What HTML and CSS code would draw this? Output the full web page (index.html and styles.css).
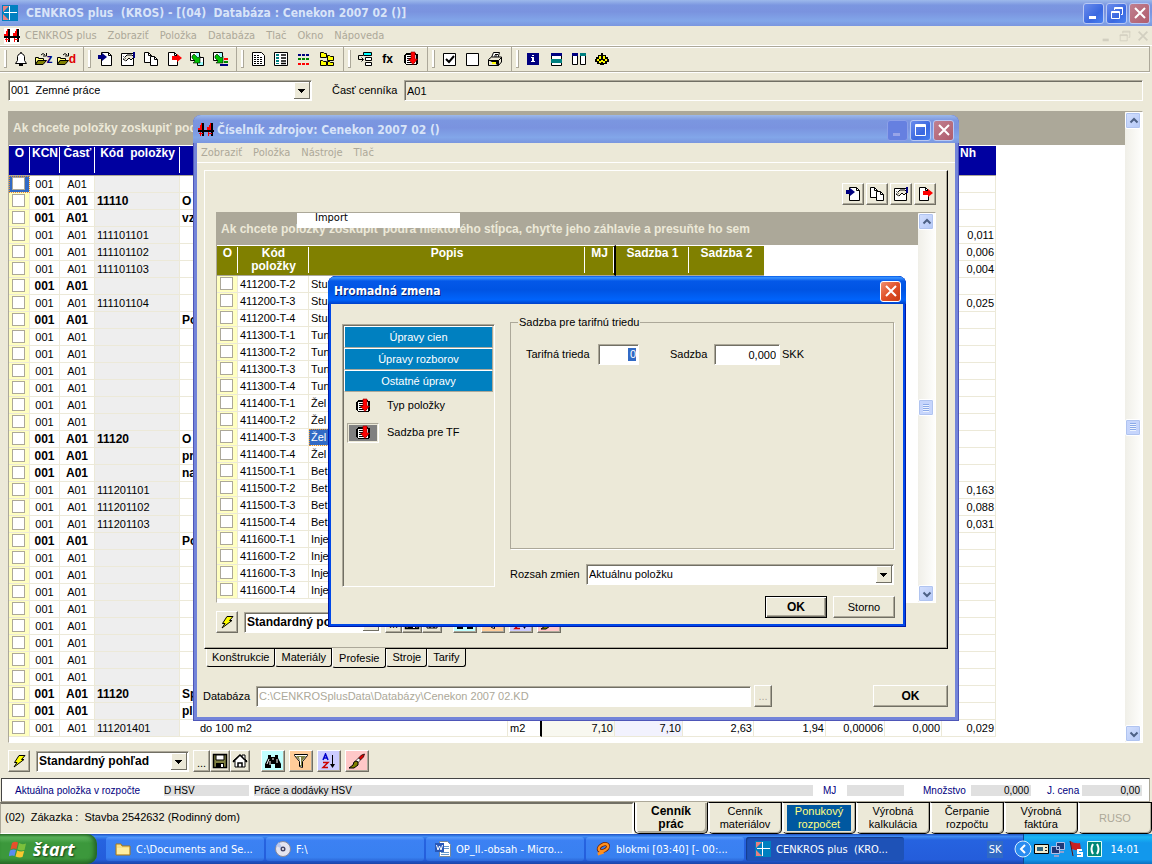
FILE: index.html
```html
<!DOCTYPE html>
<html lang="sk">
<head>
<meta charset="utf-8">
<title>CENKROS plus</title>
<link rel="stylesheet" href="styles.css">
</head>
<body>
<svg class="sprite" aria-hidden="true">
  <symbol id="app" viewBox="0 0 16 16"><path fill="#0080c0" d="M0 0h16v16H0z"/><path fill="#e88080" d="M1 1h6L1 7zM1 9l6 6H1z"/><path fill="#fff" d="M7 1h1v14H7zM2 7h13v1H2z"/></symbol>
  <symbol id="bridge" viewBox="0 0 16 16"><path fill="#000" d="M4 1h2v13H4zM13 1h2v13h-2zM0 8h16v2H0z"/><path fill="#f00" d="M2 3h2v5H2zM0 6h2v2H0zM3 1h1v2H3zM11 3h2v5h-2zM9 5h2v3H9zM12 1h1v2h-1zM1 11h4v1H1zM2 10h1v4H2zM10 11h4v1h-4zM10 10h1v4h-1z"/></symbol>
  <symbol id="bell" viewBox="0 0 16 16"><path fill="#fff" stroke="#000" d="M7.500 1.500h1v1l2 1 1 2v4l2 3h-11l2-3v-4l1-2 2-1z"/><path fill="#000" d="M6 13h4v2H6z"/></symbol>
  <symbol id="folder" viewBox="0 0 12 16"><path d="M.5 6.500h3v1h5v2H3l-2.500 4z" fill="#ffff80" stroke="#000"/><path d="M3 9.500h8.500l-3.500 4H.5z" fill="#808000" stroke="#000"/><path d="M6 4q2-3 4 0m1.500-2v3H8" fill="none" stroke="#000"/></symbol>
  <symbol id="pagein" viewBox="0 0 16 16"><path fill="#fff" stroke="#000" d="M4.500 1.500h7l3 3v10h-10z"/><path fill="none" stroke="#000" d="M11.500 1.500v3h3"/><path fill="#000080" d="M1 4h4V2l5 4-5 4V8H1z"/></symbol>
  <symbol id="hand" viewBox="0 0 16 16"><path fill="#fff" stroke="#000" d="M1.500 2.500h12v12h-12z"/><path fill="#ece9d8" stroke="#000" d="M3 8l4-4 5 0 2 2-3 3-2-2-2 2-1 1z"/><path fill="#000080" d="M13 1h2v6h-2z"/><path stroke="#777" d="M3 5l3 3M3 7l3 3"/></symbol>
  <symbol id="copy" viewBox="0 0 16 16"><path fill="#fff" stroke="#000" d="M1.500 1.500h4l3 3v7h-7z"/><path fill="#fff" stroke="#000" d="M7.500 5.500h4l3 3v6h-7z"/><path fill="none" stroke="#000" d="M5.500 1.500v3h3M11.500 5.500v3h3"/></symbol>
  <symbol id="pageout" viewBox="0 0 16 16"><path fill="#fff" stroke="#000" d="M2.500 1.500h6l3 3v10h-9z"/><path fill="none" stroke="#000" d="M8.500 1.500v3h3"/><path fill="#f00" d="M6 5h5V3l5 4-5 4V9H6z"/></symbol>
  <symbol id="green" viewBox="0 0 16 16"><path fill="#fff" stroke="#000" d="M1.500 1.500h9v8h-9zM8.500 6.500h6v8h-6z"/><path fill="#a0ffff" d="M7 2h3v5H7zM9 11h5v3H9z"/><path fill="#00c000" stroke="#000" stroke-width=".6" d="M3 5l2-2 4 4 2-2v7H4l2-2-3-3z"/></symbol>
  <symbol id="green2" viewBox="0 0 16 16"><path fill="#fff" stroke="#000" d="M1.500 1.500h9v8h-9z"/><path fill="#a0ffff" d="M7 2h3v5H7z"/><path fill="#f00" d="M12 7h4v2h-4z"/><path fill="#080" d="M12 10h4v2h-4z"/><path fill="#000080" d="M8 13h8v2H8z"/><path fill="#00c000" stroke="#000" stroke-width=".6" d="M3 5l2-2 4 4 2-2v7H4l2-2-3-3z"/></symbol>
  <symbol id="doc" viewBox="0 0 16 16"><path fill="#fff" stroke="#000" d="M2.500 1.500h9l3 3v10h-12z"/><path stroke="#000" stroke-dasharray="2 1" d="M4 4.500h6M4 6.500h8M4 8.500h8M4 10.500h8M4 12.500h8"/></symbol>
  <symbol id="sheet" viewBox="0 0 16 16"><path fill="#fff" stroke="#000" d="M1.500 1.500h13v13h-13z"/><path fill="#008080" d="M3 3h3v2H3zM3 6h3v2H3zM3 9h3v2H3zM3 12h3v1H3z"/><path stroke="#000" stroke-width="1.500" d="M8 4h5M8 7h5M8 10h5M8 12.500h5"/></symbol>
  <symbol id="lines" viewBox="0 0 16 16"><path stroke="#000080" stroke-width="2" stroke-dasharray="3 1" d="M2 4h12"/><path stroke="#008000" stroke-width="2" stroke-dasharray="3 1" d="M2 8h12"/><path stroke="#f00" stroke-width="2" stroke-dasharray="3 1" d="M2 13h12"/></symbol>
  <symbol id="tree" viewBox="0 0 16 16"><path fill="#ff0" stroke="#000" d="M1.500 1.500h3l1 1h2v4h-6zM8.500 4.500h2l1 1h3v4h-6zM1.500 9.500h2l1 1h3v4h-6zM8.500 10.500h2l1 1h3v3h-6z"/></symbol>
  <symbol id="insert" viewBox="0 0 16 16"><path fill="#0ff" stroke="#000" d="M6.500 1.500h8v3h-8z"/><path fill="#fff" stroke="#000" d="M8.500 6.500h6v3h-6zM8.500 11.500h6v3h-6z"/><path fill="none" stroke="#000" d="M6 4.500H1.500v4H6M4.500 6.500l2 2-2 2"/></symbol>
  <symbol id="book" viewBox="0 0 16 16"><path fill="#000" d="M3 2h10v1h2v10h-1v1H3v-1H2v-1H1V4h1V3h1z"/><path fill="#fff" d="M3 4h10v9H3z"/><path fill="#000" d="M4 5h8v1H4zM4 7h8v1H4zM4 9h8v1H4zM4 11h8v1H4z"/><path fill="#f00" stroke="#900000" stroke-width=".6" d="M8 1h4v7h2.500L10 13.500 5.500 8H8z"/></symbol>
  <symbol id="check" viewBox="0 0 16 16"><path fill="#fff" stroke="#000" d="M2.500 2.500h12v12h-12z"/><path fill="none" stroke="#000" stroke-width="2" d="M5 8l3 3 5-6"/></symbol>
  <symbol id="box" viewBox="0 0 16 16"><path fill="#fff" stroke="#000" d="M2.500 2.500h12v12h-12z"/></symbol>
  <symbol id="printer" viewBox="0 0 16 16"><path fill="#fff" stroke="#000" d="M4.500 6.500l2-5h6l-1.500 5"/><path fill="#ece9d8" stroke="#000" d="M1.500 8.500l3-2.500h10v5l-3 3.500h-10z"/><path stroke="#000" d="M2 9.500h9.500v5M11.500 9.500l3-3M8 3.500h3M7 5h3"/><path fill="#ff0" d="M5 11h4v2H5z"/></symbol>
  <symbol id="info" viewBox="0 0 16 16"><path fill="#000080" d="M2 2h12v12H2z"/><path fill="#fff" d="M7 4h2v1H7zM6 6h3v4h1v1H6v-1h1V7H6z"/></symbol>
  <symbol id="rows" viewBox="0 0 16 16"><path fill="#fff" stroke="#000" d="M3.500 2.500h10v12h-10z"/><path fill="#000080" d="M3 2h11v3H3z"/><path fill="#008080" d="M3 8h11v4H3z"/></symbol>
  <symbol id="cols" viewBox="0 0 16 16"><path fill="#fff" stroke="#000" d="M1.500 2.500h5v11h-5zM9.500 2.500h5v11h-5z"/><path fill="#000080" d="M1 2h6v3H1z"/><path fill="#008080" d="M9 2h6v3H9z"/></symbol>
  <symbol id="gear" viewBox="0 0 16 16"><path fill="#000" d="M7 2h2v2h3v2h2v2h1v3h-2v2h-3v1H6v-1H3v-2H1V8h1V6h2V4h3z"/><path fill="#ff0" d="M5 5h2v3H5zM9 5h2v3H9zM3 8h2v2H3zM11 8h2v2h-2zM5 10h2v2H5zM9 10h2v2H9zM7 9h2v2H7z"/></symbol>
  <symbol id="bolt" viewBox="0 0 16 16"><path fill="#ff0" stroke="#000" d="M8 2.500h6l-3.500 4H13L3 14l3-4.500H3.500z"/></symbol>
  <symbol id="floppy" viewBox="0 0 16 16"><path fill="#808040" stroke="#000" stroke-width="1.500" d="M1.500 1.500h13v13h-13z"/><path fill="#fff" stroke="#000" d="M4 2h8v5H4z"/><path fill="#000" d="M4 10h8v5H4z"/><path fill="#fff" d="M9 11h2v3H9z"/></symbol>
  <symbol id="house" viewBox="0 0 16 16"><path fill="#fff" stroke="#000" d="M1 8l7-6 2 2V2h3v4l2 2h-2v6H3V8z"/><path fill="none" stroke="#000" stroke-width="1.500" d="M1 9l7-7 7 7M6 14v-4h4v4"/></symbol>
  <symbol id="binoc" viewBox="0 0 16 16"><path fill="#000" d="M3 2h3v2h4V2h3v3l3 6v4h-6v-4H6v4H0v-4l3-6z"/><path stroke="#fff" d="M2 11l2-5M5 8v4M12 6v4M8 5v2"/></symbol>
  <symbol id="funnel" viewBox="0 0 16 16"><path fill="#fff" stroke="#000" d="M1.500 1.500h13v1l-5 6v6l-3-1v-5l-5-6z"/><path fill="#808040" d="M3 3h10l-4 5v5H7V8z"/><path fill="#fff" d="M6 4h2v8H7V8z"/></symbol>
  <symbol id="sort" viewBox="0 0 16 16"><path fill="none" stroke="#00c" stroke-width="1.500" d="M2 7l2.500-6L7 7M3 5h3"/><path fill="none" stroke="#c00" stroke-width="1.500" d="M2 9.500h5l-5 5h5"/><path fill="#000" d="M11 2h1v9h2l-2.500 4L9 11h2z"/></symbol>
  <symbol id="brush" viewBox="0 0 16 16"><path fill="#d00" stroke="#000" stroke-width=".7" d="M15.500 1l-3 1-3 3 2 2 3-3z"/><path fill="#fff" stroke="#000" stroke-width=".7" d="M9.500 5L7 7.500l2 2L11.500 7z"/><path fill="#808000" stroke="#000" d="M7 8L5 9l-1 3-4 3h5l4-3V9z"/></symbol>
  <symbol id="flag" viewBox="0 0 20 20"><path fill="#e8502c" d="M3 4q3-2 6-.5L7.500 10q-3-1-6 .5z"/><path fill="#7cc03c" d="M10 4q3 2 7 .5L15.500 11q-3 1-7 -.5z"/><path fill="#5a8cf0" d="M1 11.500q3-1.500 6-.5L5.500 17Q3 16-.5 17.500z"/><path fill="#f8c830" d="M8.200 11.500q3 1.500 7 .5L13.500 18q-3 1-7-.5z"/></symbol>
  <symbol id="fold" viewBox="0 0 16 16"><path fill="#f8e088" stroke="#a87818" d="M1 3h5l1 2h8v9H1z"/><path fill="#ffeda0" d="M2 7h12v6H2z"/></symbol>
  <symbol id="cd" viewBox="0 0 16 16"><circle cx="8" cy="8" r="7.500" fill="#e4e4f0" stroke="#889"/><path fill="#b8c8f0" d="M8 8L1 5l3-4z"/><circle cx="8" cy="8" r="2.500" fill="#446"/><circle cx="8" cy="8" r="1" fill="#fff"/></symbol>
  <symbol id="word" viewBox="0 0 16 16"><path fill="#fff" stroke="#789" d="M4.500.5h8l3 3v12h-11z"/><path stroke="#69c" d="M9 5.500h5M9 7.500h5M6 11.500h8M6 13.500h8"/><path fill="#2858b8" d="M0 2h9v9H0z"/><path fill="none" stroke="#fff" d="M1.500 4l1.500 5 1.500-4L6 9l1.500-5"/></symbol>
  <symbol id="player" viewBox="0 0 16 16"><g transform="rotate(-28 8 8)"><ellipse cx="9" cy="7" rx="5" ry="3" fill="none" stroke="#702000" stroke-width="4"/><ellipse cx="9" cy="7" rx="5" ry="3" fill="none" stroke="#ff9020" stroke-width="2.500"/><path stroke="#ff9020" stroke-width="3" d="M1 10l6 1"/></g></symbol>
  <symbol id="min" viewBox="0 0 16 16"><path fill="currentColor" d="M3 11h7v3H3z"/></symbol>
  <symbol id="rest" viewBox="0 0 16 16"><path fill="none" stroke="currentColor" d="M2.500 6.500h8v7h-8zM2 7.500h9M5.500 5V2.500h8v7H12M5 3.500h9"/></symbol>
  <symbol id="max" viewBox="0 0 16 16"><path fill="none" stroke="currentColor" d="M2.500 2.500h10v11h-10zM2 3.500h11M2 4.500h11"/></symbol>
  <symbol id="x" viewBox="0 0 16 16"><path fill="none" stroke="currentColor" stroke-width="2" d="M3 3l10 10M13 3L3 13"/></symbol>
  <symbol id="up" viewBox="0 0 16 16"><path fill="none" stroke="#4d6185" stroke-width="2" d="M4.500 9.500L8 6l3.500 3.500"/></symbol>
  <symbol id="down" viewBox="0 0 16 16"><path fill="none" stroke="#4d6185" stroke-width="2" d="M4.500 6.500L8 10l3.500-3.500"/></symbol>
</svg>

<main class="desktop">
  <header class="titlebar">
    <svg class="ico"><use href="#app"/></svg>
    <h1 class="title">CENKROS plus&nbsp; (KROS) - [(04)&nbsp; Databáza : Cenekon 2007 02 ()]</h1>
    <button class="capbtn" aria-label="Minimalizovať"><svg class="ico"><use href="#min"/></svg></button>
    <button class="capbtn" aria-label="Obnoviť"><svg class="ico"><use href="#rest"/></svg></button>
    <button class="capbtn capbtn-close" aria-label="Zavrieť"><svg class="ico"><use href="#x"/></svg></button>
  </header>
  <nav class="menubar menubar-main">
    <svg class="ico bridge"><use href="#bridge"/></svg>
    <span>CENKROS plus</span><span>Zobraziť</span><span>Položka</span><span>Databáza</span><span>Tlač</span><span>Okno</span><span>Nápoveda</span>
    <div class="mdi"><svg><use href="#min"/></svg><svg><use href="#rest"/></svg><svg><use href="#x"/></svg></div>
  </nav>
  <div class="toolbar">
    <div class="group"><i class="grip"></i>
      <button aria-label="Zvonček"><svg class="ico"><use href="#bell"/></svg></button>
      <button><svg class="fold"><use href="#folder"/></svg><b class="navy">z</b></button>
      <button><svg class="fold"><use href="#folder"/></svg><b class="red">d</b></button></div>
    <div class="group"><i class="grip"></i>
      <button aria-label="Vložiť"><svg class="ico"><use href="#pagein"/></svg></button>
      <button aria-label="Vlastnosti"><svg class="ico"><use href="#hand"/></svg></button>
      <button aria-label="Kopírovať"><svg class="ico"><use href="#copy"/></svg></button>
      <button aria-label="Vyňať"><svg class="ico"><use href="#pageout"/></svg></button>
      <button aria-label="Presun"><svg class="ico"><use href="#green"/></svg></button>
      <button aria-label="Presun viac"><svg class="ico"><use href="#green2"/></svg></button></div>
    <div class="group"><i class="grip"></i>
      <button aria-label="Text"><svg class="ico"><use href="#doc"/></svg></button>
      <button aria-label="Rozbor"><svg class="ico"><use href="#sheet"/></svg></button>
      <button aria-label="Riadky"><svg class="ico"><use href="#lines"/></svg></button>
      <button aria-label="Strom"><svg class="ico"><use href="#tree"/></svg></button></div>
    <div class="group"><i class="grip"></i>
      <button aria-label="Zaradiť"><svg class="ico"><use href="#insert"/></svg></button>
      <button><b>fx</b></button>
      <button aria-label="Hromadná zmena"><svg class="ico"><use href="#book"/></svg></button></div>
    <div class="group"><i class="grip"></i>
      <button aria-label="Označiť"><svg class="ico"><use href="#check"/></svg></button>
      <button aria-label="Odznačiť"><svg class="ico"><use href="#box"/></svg></button>
      <button aria-label="Tlač"><svg class="ico"><use href="#printer"/></svg></button></div>
    <div class="group group-last"><i class="grip"></i>
      <button aria-label="Info"><svg class="ico"><use href="#info"/></svg></button>
      <button aria-label="Vodorovne"><svg class="ico"><use href="#rows"/></svg></button>
      <button aria-label="Zvislo"><svg class="ico"><use href="#cols"/></svg></button>
      <button aria-label="Nastavenia"><svg class="ico"><use href="#gear"/></svg></button></div>
  </div>

  <div class="filter">
    <select class="combo combo-part" aria-label="Cenník"><option>001&nbsp; Zemné práce</option></select>
    <label for="part">Časť cenníka</label>
    <input id="part" class="field field-flat" value="A01" readonly>
  </div>

  <section class="grid grid-main">
    <div class="sheet">
      <p class="hint">Ak chcete položky zoskupiť podľa</p>
      <table class="tbl">
        <colgroup><col style="width:21px"><col style="width:30px"><col style="width:35px"><col style="width:85px"><col style="width:328px"><col style="width:34px"><col style="width:73px"><col style="width:68px"><col style="width:71px"><col style="width:72px"><col style="width:59px"><col style="width:57px"><col style="width:54px"></colgroup>
        <thead class="navyhead"><tr><th>O</th><th>KCN</th><th>Časť</th><th>Kód&nbsp; položky</th><th></th><th></th><th></th><th></th><th></th><th></th><th></th><th></th><th class="left">Nh</th></tr></thead>
        <tbody id="items"></tbody>
      </table>
    </div>
    <div class="scroll"><button class="sbtn" aria-label="Hore"><svg class="ico"><use href="#up"/></svg></button><i class="sbtn thumb"></i><button class="sbtn" aria-label="Dole"><svg class="ico"><use href="#down"/></svg></button></div>
  </section>

  <div class="viewbar viewbar-main">
    <button class="tb" aria-label="Obnoviť"><svg class="ico"><use href="#bolt"/></svg></button>
    <select class="combo combo-view" aria-label="Pohľad"><option>Štandardný pohľad</option></select>
    <span class="trio"><button class="tb tb-dots">...</button><button class="tb tb-narrow" aria-label="Uložiť"><svg class="ico"><use href="#floppy"/></svg></button><button class="tb tb-narrow" aria-label="Domov"><svg class="ico"><use href="#house"/></svg></button></span>
    <span class="quad"><button class="tb cyan" aria-label="Hľadať"><svg class="ico"><use href="#binoc"/></svg></button><button class="tb orange" aria-label="Filter"><svg class="ico"><use href="#funnel"/></svg></button><button class="tb violet" aria-label="Triediť"><svg class="ico"><use href="#sort"/></svg></button><button class="tb pink" aria-label="Formát"><svg class="ico"><use href="#brush"/></svg></button></span>
  </div>

  <div class="strip">
    <span class="lbl lbl-first">Aktuálna položka v rozpočte</span><output class="val v1">D HSV</output><output class="val v2">Práce a dodávky HSV</output>
    <span class="lbl lbl-mj">MJ</span><output class="val v3"></output><span class="lbl lbl-mn">Množstvo</span><output class="val v4">0,000</output><span class="lbl lbl-jc">J. cena</span><output class="val v4">0,00</output>
  </div>
  <div class="status">
    <p class="order">(02)&nbsp; Zákazka :&nbsp; Stavba 2542632 (Rodinný dom)</p>
    <nav class="views">
      <button class="vt vt-on">Cenník<br>prác</button><button class="vt">Cenník<br>materiálov</button><button class="vt"><span class="hot">Ponukový<br>rozpočet</span></button><button class="vt">Výrobná<br>kalkulácia</button><button class="vt">Čerpanie<br>rozpočtu</button><button class="vt">Výrobná<br>faktúra</button><button class="vt vt-off" disabled>RUSO</button>
    </nav>
  </div>
  <footer class="taskbar">
    <button class="start"><svg class="winlogo"><use href="#flag"/></svg>štart</button>
    <div class="tasks">
      <button class="task"><svg class="ico"><use href="#fold"/></svg>C:\Documents and Se...</button>
      <button class="task"><svg class="ico"><use href="#cd"/></svg>F:\</button>
      <button class="task"><svg class="ico"><use href="#word"/></svg>OP_II.-obsah - Micro...</button>
      <button class="task"><svg class="ico"><use href="#player"/></svg>blokmi [03:40] [- 00:...</button>
      <button class="task task-on"><svg class="ico"><use href="#app"/></svg>CENKROS plus&nbsp; (KRO...</button>
    </div>
    <span class="lang">SK</span>
    <div class="tray">
      <svg class="traypic" viewBox="0 0 92 20">
        <circle cx="9" cy="10" r="8" fill="#2a8cf0" stroke="#d8ecff"/><path d="M11 6l-4 4 4 4" fill="none" stroke="#fff" stroke-width="2"/>
        <path fill="#f0ecd0" stroke="#000" d="M20.500 5.500h14v9h-14z"/><path fill="#306880" d="M23 8h6v4h-6z"/><path fill="#222" d="M31 8h2v1h-2zM31 11h2v1h-2z"/>
        <path fill="#203878" stroke="#b0c0e8" d="M42.500 3.500h8v7h-8zM37.500 7.500h8v7h-8z"/><path fill="#90a0d0" d="M40 16h5v2h-5zM46 12h4v2h-4z"/>
        <path fill="#c82020" d="M56 2q5 3 10 2l1 7q-5 1-9-1z"/><path stroke="#601010" d="M56 2l3 15"/><path fill="none" stroke="#fff" stroke-width="2" d="M68 11h-4v3h4v3h-5"/>
        <path fill="#008878" stroke="#e0fff8" d="M73.500 2.500h14v15h-14z"/><path fill="none" stroke="#fff" stroke-width="2" d="M79 5q-3 5 0 10M83 5q3 5 0 10"/>
      </svg>
      <time>14:01</time>
    </div>
  </footer>

  <section class="win" aria-label="Číselník zdrojov">
    <header class="titlebar titlebar-win">
      <svg class="ico"><use href="#bridge"/></svg>
      <h2 class="title">Číselník zdrojov: Cenekon 2007 02 ()</h2>
      <button class="capbtn capbtn-off" aria-label="Minimalizovať"><svg class="ico"><use href="#min"/></svg></button>
      <button class="capbtn" aria-label="Maximalizovať"><svg class="ico"><use href="#max"/></svg></button>
      <button class="capbtn capbtn-close" aria-label="Zavrieť"><svg class="ico"><use href="#x"/></svg></button>
    </header>
    <nav class="menubar menubar-win"><span>Zobraziť</span><span>Položka</span><span>Nástroje</span><span>Tlač</span></nav>
    <div class="page">
      <div class="pagetools">
        <button class="tb" aria-label="Vložiť"><svg class="ico"><use href="#pagein"/></svg></button><button class="tb" aria-label="Kopírovať"><svg class="ico"><use href="#copy"/></svg></button><button class="tb" aria-label="Vlastnosti"><svg class="ico"><use href="#hand"/></svg></button><button class="tb" aria-label="Vyňať"><svg class="ico"><use href="#pageout"/></svg></button>
      </div>
      <div class="grid grid-win">
        <div class="sheet">
          <p class="hint">Ak chcete položky zoskupiť podľa niektorého stĺpca, chyťte jeho záhlavie a presuňte ho sem</p>
          <div class="popup">Import</div>
          <table class="tbl">
            <colgroup><col style="width:21px"><col style="width:71px"><col style="width:276px"><col style="width:31px"><col style="width:73px"><col style="width:75px"></colgroup>
            <thead class="olivehead"><tr><th>O</th><th>Kód<br>položky</th><th>Popis</th><th class="thick">MJ</th><th>Sadzba 1</th><th>Sadzba 2</th></tr></thead>
            <tbody id="jobs"></tbody>
          </table>
        </div>
        <div class="scroll"><button class="sbtn" aria-label="Hore"><svg class="ico"><use href="#up"/></svg></button><i class="sbtn thumb"></i><button class="sbtn" aria-label="Dole"><svg class="ico"><use href="#down"/></svg></button></div>
      </div>
      <div class="viewbar viewbar-win">
        <button class="tb" aria-label="Obnoviť"><svg class="ico"><use href="#bolt"/></svg></button>
        <select class="combo combo-view" aria-label="Pohľad"><option>Štandardný pohľad</option></select>
        <span class="trio"><button class="tb tb-dots">...</button><button class="tb tb-narrow" aria-label="Uložiť"><svg class="ico"><use href="#floppy"/></svg></button><button class="tb tb-narrow" aria-label="Domov"><svg class="ico"><use href="#house"/></svg></button></span>
        <span class="quad"><button class="tb cyan" aria-label="Hľadať"><svg class="ico"><use href="#binoc"/></svg></button><button class="tb orange" aria-label="Filter"><svg class="ico"><use href="#funnel"/></svg></button><button class="tb violet" aria-label="Triediť"><svg class="ico"><use href="#sort"/></svg></button><button class="tb pink" aria-label="Formát"><svg class="ico"><use href="#brush"/></svg></button></span>
      </div>
    </div>
    <nav class="tabs"><button class="tab">Konštrukcie</button><button class="tab">Materiály</button><button class="tab tab-on">Profesie</button><button class="tab">Stroje</button><button class="tab">Tarify</button></nav>
    <div class="dbrow">
      <label for="db">Databáza</label>
      <input id="db" class="field" value="C:\CENKROSplusData\Databázy\Cenekon 2007 02.KD" disabled>
      <button class="push push-dots" disabled>...</button>
      <button class="push push-ok">OK</button>
    </div>
  </section>

  <section class="dlg" role="dialog" aria-label="Hromadná zmena">
    <header class="titlebar titlebar-dlg">
      <h2 class="title">Hromadná zmena</h2>
      <button class="capbtn capbtn-red" aria-label="Zavrieť"><svg class="ico"><use href="#x"/></svg></button>
    </header>
    <div class="dlgbody">
      <div class="outlook">
        <button class="bar">Úpravy cien</button><button class="bar">Úpravy rozborov</button><button class="bar">Ostatné úpravy</button>
        <button class="entry"><span class="pic"><svg class="ico"><use href="#book"/></svg></span>Typ položky</button>
        <button class="entry"><span class="pic pic-on"><svg class="ico"><use href="#book"/></svg></span>Sadzba pre TF</button>
      </div>
      <div class="side">
        <fieldset class="box">
          <legend>Sadzba pre tarifnú triedu</legend>
          <label for="tt">Tarifná trieda</label><span class="field num"><input id="tt" class="sel" value="0"></span>
          <label for="rate" class="ratelbl">Sadzba</label><input id="rate" class="field rate" value="0,000"><span class="unit">SKK</span>
        </fieldset>
        <div class="scope"><label for="scope">Rozsah zmien</label><select id="scope" class="combo"><option>Aktuálnu položku</option></select></div>
      </div>
    </div>
    <div class="actions"><button class="push push-default">OK</button><button class="push">Storno</button></div>
  </section>
</main>
<script src="tables.js"></script>
</body>
</html>
```
FILE: tables.js
```js
// Item rows: [bold, code, description, Nh]
var plain = [0, "", "", ""];
var items = [
  plain, [1, "11110", "O", ""], [1, "", "vz", ""],
  [0, "111101101", "", "0,011"], [0, "111101102", "", "0,006"], [0, "111101103", "", "0,004"],
  [1, "", "", ""], [0, "111101104", "", "0,025"], [1, "", "Po", ""],
  plain, plain, plain, plain, plain, plain,
  [1, "11120", "O", ""], [1, "", "pr", ""], [1, "", "na", ""],
  [0, "111201101", "", "0,163"], [0, "111201102", "", "0,088"], [0, "111201103", "", "0,031"],
  [1, "", "Po", ""],
  plain, plain, plain, plain, plain, plain, plain, plain,
  [1, "11120", "Sp", ""], [1, "", "pl", ""],
  [0, "111201401", "do 100 m2", "0,029"]
];
var tick = '<input type="checkbox" class="tick" aria-label="Označiť">';
document.getElementById("items").innerHTML = items.map(function (r, i) {
  var last = i === items.length - 1;
  var nums = last ? ["m2", "7,10", "7,10", "2,63", "1,94", "0,00006", "0,000"] : ["", "", "", "", "", "", ""];
  return '<tr class="' + (r[0] ? "strong" : "") + '"><td class="o' + (i ? "" : " cur") + '">' + tick +
    '</td><td class="mid">001</td><td class="mid">A01</td><td class="code">' + r[1] +
    '</td><td class="' + (last ? "indent" : "") + '">' + r[2] + '</td><td class="thick">' + nums[0] +
    '</td><td class="num cream">' + nums[1] + '</td><td class="num lilac">' + nums[2] + "</td>" +
    nums.slice(3).concat(r[3]).map(function (n) { return '<td class="num">' + n + "</td>"; }).join("") + "</tr>";
}).join("");

// Job groups: [group, class numbers, description]
var groups = [
  ["411200", [2, 3, 4], "Stu"], ["411300", [1, 2, 3, 4], "Tun"], ["411400", [1, 2, 3, 4], "Žel"],
  ["411500", [1, 2, 3, 4], "Bet"], ["411600", [1, 2, 3, 4], "Inje"]
];
document.getElementById("jobs").innerHTML = groups.map(function (g) {
  return g[1].map(function (n) {
    var code = g[0] + "-T-" + n;
    return '<tr><td class="o">' + tick + "</td><td>" + code + '</td><td class="' +
      (code === "411400-T-3" ? "cur" : "") + '">' + g[2] + '</td><td class="thick"></td><td></td><td></td></tr>';
  }).join("");
}).join("");
```
FILE: styles.css
```css
* { box-sizing: border-box; }
body { margin: 0; background: #ece9d8; color: #000; font: 11px/13px "Liberation Sans", Arial, sans-serif; }
p, h1, h2 { margin: 0; font: inherit; }
button, input, select { font: inherit; color: inherit; margin: 0; padding: 0; border: 0; background: none; border-radius: 0; }
svg { display: block; flex: none; }
.sprite { position: absolute; width: 0; height: 0; }
.ico { width: 16px; height: 16px; }
.desktop { position: relative; min-height: 100vh; display: flex; flex-direction: column; overflow: hidden; }

/* title bars */
.titlebar { display: flex; align-items: center; gap: 2px; height: 26px; padding: 0 2px; color: #d8e4f8;
  background: linear-gradient(#9db9eb 0, #7b96e0 20%, #7a93df 45%, #82a6e9 80%, #7a96df 100%); }
.title { flex: 1; padding-left: 6px; font: bold 12px/16px "DejaVu Sans Condensed", "DejaVu Sans", sans-serif; white-space: nowrap; }
.capbtn { width: 21px; height: 21px; display: grid; place-items: center; color: #fff; border: 1px solid #b8c8f4; border-radius: 3px; background: linear-gradient(135deg, #6a8cec, #3a68e0 60%, #4880f0); }
.capbtn-close { background: linear-gradient(135deg, #c08090, #b05c6c); }
.capbtn-off { color: #98a4e8; background: #6680e0; border-color: #8ca0e8; }
.capbtn-red { background: linear-gradient(135deg, #f09070, #e05028 50%, #c83c14); border-color: #fff; }

/* menus */
.menubar { display: flex; align-items: center; gap: 11px; height: 20px; color: #aca899; border-bottom: 1px solid #fff; font: 11px/13px "DejaVu Sans Condensed", "DejaVu Sans", sans-serif; white-space: nowrap; }
.menubar-main { padding-left: 4px; }
.menubar-win { padding-left: 4px; }
.bridge { background: #fff; margin-right: -6px; }
.mdi { margin-left: auto; display: flex; gap: 4px; padding-right: 2px; color: #d2cfc0; }
.mdi svg { width: 14px; height: 14px; }

/* main toolbar */
.toolbar { display: flex; height: 26px; border: 1px solid #aca899; border-left: 0; box-shadow: inset 0 1px #fff, 0 1px #fff; margin-right: 2px; }
.group { display: flex; align-items: center; padding: 0 5px 0 4px; border-right: 1px solid #aca899; }
.group-last { border-right: 0; }
.grip { width: 3px; height: 18px; margin-right: 2px; background: #fff; border-right: 1px solid #aca899; border-bottom: 1px solid #aca899; }
.group button { width: 23px; height: 22px; display: flex; align-items: center; justify-content: center; }
.group b { font-size: 12px; }
.fold { width: 12px; height: 16px; }
.navy { color: #000080; }
.red { color: #e00000; }

/* fields */
.field, .combo { height: 21px; padding: 0 3px; background: #fff; border: 1px solid; border-color: #aca899 #fff #fff #aca899; box-shadow: inset 1px 1px #716f64; outline: 0; }
.field-flat { flex: 1; background: #ece9d8; padding-left: 2px; }
.field:disabled { color: #aca899; padding-left: 2px; }
.combo { appearance: none; padding: 0 20px 0 2px;
  background: linear-gradient(#000, #000) right 6px top 8px / 7px 1px no-repeat, linear-gradient(#000, #000) right 7px top 9px / 5px 1px no-repeat, linear-gradient(#000, #000) right 8px top 10px / 3px 1px no-repeat, linear-gradient(#000, #000) right 9px top 11px / 1px 1px no-repeat, linear-gradient(#ece9d8, #ece9d8) right 2px top 2px / 14px 15px no-repeat, linear-gradient(#fff, #fff) right 2px top 1px / 15px 16px no-repeat, linear-gradient(#716f64, #716f64) right 1px top 1px / 16px 17px no-repeat, #fff; }
.filter { display: flex; align-items: center; padding: 8px 9px 10px 8px; }
.combo-part { width: 304px; }
.filter label { margin: 0 8px 0 20px; width: 64px; white-space: nowrap; }

/* grids */
.grid { display: flex; background: #fff; border: 1px solid; border-color: #aca899 #fff #fff #aca899; }
.grid-main { margin: 0 9px 0 8px; padding-bottom: 5px; }
.sheet { position: relative; flex: 1; min-width: 0; overflow: hidden; }
.hint { height: 33px; padding: 10px 4px; background: #aca899; color: #ece9d8; font-weight: bold; font-size: 12px; white-space: nowrap; }
.grid-win .hint { height: 32px; }
.popup { position: absolute; top: 0; left: 80px; width: 163px; height: 15px; padding-left: 18px; background: #fff; font: 11px/10px "DejaVu Sans Condensed", "DejaVu Sans", sans-serif; }
.tbl { table-layout: fixed; width: 0; border-collapse: separate; border-spacing: 0; white-space: nowrap; }
.tbl th { height: 31px; padding: 1px 0 0; vertical-align: top; font-size: 12px; color: #fff; border-top: 1px solid #fff; border-bottom: 1px solid #aca899; background: linear-gradient(#fff, #fff) right 1px / 1px 26px no-repeat; }
.navyhead tr { background: #0000a0; }
.olivehead tr { background: #808000; }
.tbl th.left { text-align: left; padding-left: 18px; }
.tbl th:last-child { background: none; }
.tbl td { height: 17px; padding: 0 2px; line-height: 16px; border-right: 1px solid #ece9d8; border-bottom: 1px solid #ece9d8; overflow: hidden; }
.tbl td.o { background: #ffffc0; padding: 1px 3px 2px; }
.tbl td.mid { text-align: center; padding: 0; }
.tbl td.code { background: #eee; }
.tbl td.num { text-align: right; padding: 0 1px; }
.tbl td.indent { padding-left: 20px; }
.tbl td.cream { background: #f8f8f0; }
.tbl td.lilac { background: #f2f2fe; }
.tbl td.thick, .tbl th.thick { border-right: 2px solid #000; }
.tbl td.cur { background: #316ac5; color: #fff; outline: 1px dotted #f09020; outline-offset: -1px; }
.strong { font-weight: bold; font-size: 12px; }
.tick { display: block; appearance: none; width: 13px; height: 13px; background: #fff; border: 1px solid #aca899; }
.scroll { width: 17px; display: flex; flex-direction: column; justify-content: space-between; background: linear-gradient(90deg, #f0efe8, #fefefc); }
.grid-main .scroll { margin-bottom: -5px; }
.sbtn { width: 16px; height: 17px; border: 1px solid #fff; border-radius: 2px; background: linear-gradient(135deg, #d4e0fe, #b4c8f6); box-shadow: inset 0 0 0 1px #b0c4f0; display: grid; place-items: center; }
.thumb { background: repeating-linear-gradient(#8caae8 0 1px, #eef4fe 1px 2px) 50% 50% / 6px 8px no-repeat, #c6d5fc; }

/* raised buttons */
.tb { width: 22px; height: 22px; display: grid; place-items: center; background: #ece9d8; border: 1px solid; border-color: #fff #716f64 #716f64 #fff; box-shadow: inset -1px -1px #aca899; }
.tb-narrow { width: 20px; }
.tb-dots { width: 17px; padding-top: 4px; }
.viewbar { display: flex; align-items: center; }
.viewbar-main { padding: 7px 8px 6px; height: 35px; }
.viewbar-win { margin-top: 8px; }
.combo-view { width: 153px; margin: 0 4px 0 6px; font-weight: bold; font-size: 12px; }
.viewbar-win .combo-view { width: 137px; }
.trio, .quad { display: flex; }
.quad { margin-left: 11px; gap: 4px; }
.quad .tb { width: 24px; }
.quad .cyan { background: #c0ffff; }
.quad .orange { background: #ffcc99; }
.quad .violet { background: #ccccff; }
.quad .pink { background: #ffc8c8; }
.push { width: 62px; height: 22px; background: #ece9d8; border: 1px solid; border-color: #fff #716f64 #716f64 #fff; box-shadow: inset -1px -1px #aca899; }
.push-ok, .push-default { font-weight: bold; font-size: 12px; }
.push-default { border-color: #000; box-shadow: inset 1px 1px #fff, inset -1px -1px #716f64, inset -2px -2px #aca899; }

/* info strip, status, taskbar */
.strip { display: flex; align-items: center; height: 24px; margin: 0 2px 0 1px; padding: 0 7px 0 13px; font-size: 10px; background: #fff; border: 1px solid; border-color: #444 #aca899 #aca899 #444; white-space: nowrap; }
.lbl { color: #000080; }
.lbl-first { width: 149px; }
.val { height: 11px; line-height: 11px; background: #e0e0e0; }
.v1 { width: 85px; margin-right: 5px; }
.v2 { flex: 1; }
.v3 { width: 57px; }
.v4 { width: 60px; text-align: right; padding-right: 2px; }
.lbl-mj { width: 34px; padding-left: 10px; }
.lbl-mn { padding: 0 5px 0 19px; width: 67px; }
.lbl-jc { padding: 0 0 0 16px; width: 51px; }
.status { display: flex; flex: 1; align-items: stretch; min-height: 31px; }
.order { flex: 1; padding: 7px 4px; border: 2px solid; border-color: #716f64 #fff #fff #aca899; border-left-width: 1px; border-bottom-width: 1px; }
.views { display: flex; }
.vt { width: 74px; padding: 1px 2px; border: 1px solid #000; border-left-color: #fff; border-radius: 0 0 5px 5px; line-height: 13px; box-shadow: inset 1px 0 #fff, inset -1px -1px #aca899; }
.vt-on { font-weight: bold; font-size: 12px; border-top-color: #ece9d8; border-left-color: #000; box-shadow: inset 2px 0 #fff, inset -2px -2px #aca899; }
.vt-off { color: #aca899; }
.hot { display: block; margin: 0 2px; background: #0058a0; color: #ffff80; }
.taskbar { display: flex; align-items: center; height: 30px; color: #fff; font: 11px/13px "DejaVu Sans Condensed", "DejaVu Sans", sans-serif; background: linear-gradient(#1f4fc0 0, #3f8cf3 8%, #2663e0 20%, #245ddb 85%, #1a44a8 100%); }
.start { display: flex; align-items: center; gap: 4px; width: 97px; height: 30px; padding-left: 9px; border-radius: 0 10px 10px 0; font: italic bold 18px/24px "Open Sans", "Noto Sans", sans-serif; text-shadow: 1px 1px 2px #143c14; background: linear-gradient(#2c7a2c 0, #5cb45c 10%, #3c983c 30%, #3c983c 80%, #2a702a 100%); box-shadow: inset -3px 0 4px #246424; }
.winlogo { width: 20px; height: 20px; }
.tasks { flex: 1; display: flex; gap: 2px; padding-left: 9px; }
.task { display: flex; align-items: center; gap: 5px; width: 158px; height: 24px; padding-left: 9px; border-radius: 3px; white-space: nowrap; background: linear-gradient(#5a9cfc 0, #3c81f3 15%, #3880f0 85%, #2c68d8 100%); }
.task-on { background: #1e52b7; box-shadow: inset 1px 1px 1px #143c8c; }
.lang { padding: 2px; margin-right: 20px; background: #316ac5; }
.tray { display: flex; align-items: center; gap: 4px; height: 30px; padding-right: 13px; background: linear-gradient(#1290e0 0, #18b8f4 10%, #1298ec 30%, #1298ec 85%, #0c70c0 100%); border-left: 1px solid #104890; }
.traypic { width: 92px; height: 20px; margin-left: -10px; }

/* resource list window */
.win { position: absolute; left: 193px; top: 115px; width: 766px; padding: 0 4px 4px; background: #ece9d8; border-radius: 8px 8px 0 0; box-shadow: inset 0 0 0 1px #4e56b8, inset 0 0 0 4px #7384d9; }
.titlebar-win { height: 28px; margin: 0 -4px; padding: 2px 5px 0; border-radius: 8px 8px 0 0; }
.titlebar-win .title { padding-left: 1px; }
.page { margin: 7px 7px 0; padding: 12px 11px 15px; border: 1px solid; border-color: #fff #000 #000 #fff; box-shadow: inset -1px -1px #aca899; }
.pagetools { display: flex; justify-content: flex-end; gap: 2px; margin-bottom: 7px; }
.grid-win { padding-bottom: 3px; }
.grid-win .scroll { margin-bottom: -3px; }
.tabs { display: flex; align-items: flex-start; padding-left: 9px; height: 20px; }
.tab { height: 18px; padding: 0 5px; border: 1px solid #000; border-top: 0; border-left-color: #fff; border-radius: 0 0 3px 3px; }
.tab-on { height: 20px; margin-top: -1px; padding: 1px 6px 0; background: #ece9d8; z-index: 1; }
.dbrow { display: flex; align-items: center; padding: 16px 7px 10px 6px; }
.dbrow label { width: 53px; }
.dbrow .field { width: 495px; }
.push-dots { width: 18px; margin-left: 3px; color: #aca899; }
.push-ok { width: 75px; margin-left: auto; }

/* bulk change dialog */
.dlg { position: absolute; left: 328px; top: 276px; width: 578px; padding: 0 3px 3px; background: #ece9d8; border-radius: 8px 8px 0 0; box-shadow: inset 0 0 0 1px #0019a8, inset 0 0 0 3px #0048e8; }
.titlebar-dlg { height: 28px; margin: 0 -3px; padding: 2px 5px 0 0; border-radius: 8px 8px 0 0; color: #fff; text-shadow: 1px 1px #0a2070; background: linear-gradient(#0058e8 0, #3a93ff 6%, #0458e8 18%, #0054e3 50%, #0064fc 85%, #0040c8 100%); }
.dlgbody { display: flex; align-items: stretch; gap: 15px; padding: 12px 9px 0 11px; }
.outlook { width: 153px; min-height: 263px; margin-top: 8px; padding: 1px; border: 1px solid; border-color: #aca899 #fff #fff #aca899; box-shadow: inset 1px 1px #716f64; display: flex; flex-direction: column; }
.bar { height: 22px; color: #fff; background: #0080c0; border: 1px solid; border-color: #fff #aca899 #aca899 #fff; }
.entry { display: flex; align-items: center; gap: 8px; height: 27px; padding-left: 3px; text-align: left; }
.pic { width: 32px; height: 20px; display: grid; place-items: center; }
.pic-on { background: #808080; border: 1px solid; border-color: #aca899 #fff #fff #aca899; box-shadow: inset 0 0 0 1px #ece9d8; }
.side { flex: 1; display: flex; flex-direction: column; gap: 15px; padding-bottom: 2px; }
.box { flex: 1; display: flex; align-items: flex-start; margin: 0; padding: 15px; border: 1px solid #aca899; box-shadow: 1px 1px #fff; }
.box legend { padding: 0 1px; margin-left: -8px; }
.box label, .unit { line-height: 21px; }
.box label:first-of-type { width: 72px; }
.num.field { width: 41px; padding: 3px 2px; }
.sel { display: block; width: 8px; height: 13px; margin-left: auto; text-align: right; color: #fff; background: #316ac5; outline: 0; }
.box .ratelbl { width: 44px; margin-left: 31px; }
.rate { width: 66px; text-align: right; }
.unit { margin-left: 2px; }
.scope { display: flex; align-items: center; }
.scope label { width: 76px; }
.scope .combo { flex: 1; }
.actions { display: flex; justify-content: flex-end; gap: 6px; padding: 9px 8px 6px; }
```
